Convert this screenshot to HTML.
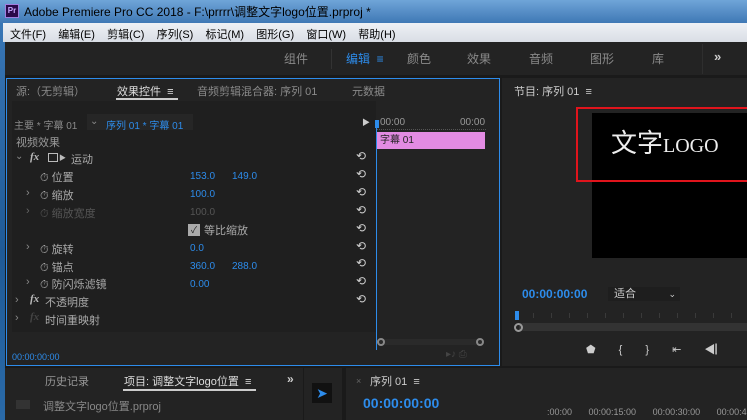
<!DOCTYPE html>
<html><head><meta charset="utf-8"><style>
*{margin:0;padding:0;box-sizing:border-box}
body{width:747px;height:420px;overflow:hidden;background:#1d1d1d;position:relative;font-family:"Liberation Sans","Noto Sans CJK SC",sans-serif;font-size:11px;color:#b5b5b5}
.a{position:absolute;white-space:nowrap}
.b{color:#2d8ceb}
</style></head><body>
<div class="a" style="left:0;top:0;width:747px;height:420px;background:linear-gradient(180deg,#3b79b8,#1f5a96 60%,#2a6aa8)"></div>
<div class="a" style="left:0;top:0;width:747px;height:23px;background:linear-gradient(180deg,#6fa5d8,#3f78b5)"></div>
<div class="a" style="left:5px;top:4px;width:14px;height:14px;background:#2a0a4a;border:1px solid #a07fe0;color:#c8a8ff;font-size:8px;line-height:12px;text-align:center;font-weight:bold">Pr</div>
<div class="a" style="left:24px;top:3px;font-size:12px;color:#000">Adobe Premiere Pro CC 2018 - F:\prrrr\调整文字logo位置.prproj *</div>
<div class="a" style="left:3px;top:23px;width:744px;height:19px;background:linear-gradient(180deg,#eef1f5,#d9dee5)"></div>
<div class="a" style="left:10px;top:26px;font-size:11px;color:#000">文件(F)&nbsp;&nbsp;&nbsp;&nbsp;编辑(E)&nbsp;&nbsp;&nbsp;&nbsp;剪辑(C)&nbsp;&nbsp;&nbsp;&nbsp;序列(S)&nbsp;&nbsp;&nbsp;&nbsp;标记(M)&nbsp;&nbsp;&nbsp;&nbsp;图形(G)&nbsp;&nbsp;&nbsp;&nbsp;窗口(W)&nbsp;&nbsp;&nbsp;&nbsp;帮助(H)</div>
<div class="a" style="left:5px;top:42px;width:742px;height:378px;background:#1a1a1a"></div>
<div class="a" style="left:5px;top:42px;width:742px;height:33px;background:#232323"></div>
<div class="a" style="left:331px;top:49px;width:1px;height:20px;background:#333"></div>
<div class="a" style="left:284px;top:50px;font-size:12px;color:#8a8a8a">组件</div>
<div class="a" style="left:346px;top:50px;font-size:12px;color:#2d8ceb">编辑 &nbsp;≡</div>
<div class="a" style="left:407px;top:50px;font-size:12px;color:#8a8a8a">颜色</div>
<div class="a" style="left:467px;top:50px;font-size:12px;color:#8a8a8a">效果</div>
<div class="a" style="left:529px;top:50px;font-size:12px;color:#8a8a8a">音频</div>
<div class="a" style="left:590px;top:50px;font-size:12px;color:#8a8a8a">图形</div>
<div class="a" style="left:652px;top:50px;font-size:12px;color:#8a8a8a">库</div>
<div class="a" style="left:702px;top:44px;width:1px;height:30px;background:#2e2e2e"></div>
<div class="a" style="left:714px;top:49px;font-size:13px;color:#ccc;font-weight:bold">»</div>
<div class="a" style="left:6px;top:78px;width:494px;height:288px;background:#232323;border:1px solid #2d8ceb"></div>
<div class="a" style="left:16px;top:83px;font-size:11px;color:#8a8a8a">源:（无剪辑）</div>
<div class="a" style="left:117px;top:83px;font-size:11px;color:#ddd">效果控件 &nbsp;≡</div>
<div class="a" style="left:116px;top:98px;width:62px;height:2px;background:#ccc"></div>
<div class="a" style="left:197px;top:83px;font-size:11px;color:#8a8a8a">音频剪辑混合器: 序列 01</div>
<div class="a" style="left:352px;top:83px;font-size:11px;color:#8a8a8a">元数据</div>
<div class="a" style="left:12px;top:101px;width:364px;height:231px;background:#1f1f1f"></div>
<div class="a" style="left:14px;top:117px;font-size:10px;color:#8a8a8a">主要 * 字幕 01</div>
<div class="a" style="left:87px;top:114px;width:106px;height:16px;background:#262626"></div>
<div class="a" style="left:90px;top:116px;font-size:10px;color:#8a8a8a">⌄</div>
<div class="a" style="left:106px;top:117px;font-size:10px;color:#2d8ceb">序列 01 * 字幕 01</div>
<div class="a" style="left:362px;top:117px;font-size:8px;color:#ccc">▶</div>
<div class="a" style="left:16px;top:134px;font-size:11px;color:#999">视频效果</div>
<div class="a" style="left:15px;top:151px;font-size:10px;color:#888">⌄</div>
<div class="a" style="left:30px;top:151px;font-size:11px;color:#bbb;font-style:italic;font-family:'Liberation Serif',serif;font-weight:bold">fx</div>
<div class="a" style="left:48px;top:153px;width:10px;height:9px;border:1px solid #bbb"></div>
<div class="a" style="left:59px;top:153px;font-size:7px;color:#bbb">▶</div>
<div class="a" style="left:71px;top:151px;color:#aaa">运动</div>
<div class="a" style="left:40px;top:169px;color:#aaa">⏱ 位置</div><div class="a b" style="left:190px;top:171px;font-size:10px">153.0</div><div class="a b" style="left:232px;top:171px;font-size:10px">149.0</div>
<div class="a" style="left:26px;top:187px;color:#888">›</div><div class="a" style="left:40px;top:187px;color:#aaa">⏱ 缩放</div><div class="a b" style="left:190px;top:189px;font-size:10px">100.0</div>
<div class="a" style="left:26px;top:205px;color:#666">›</div><div class="a" style="left:40px;top:205px;color:#555">⏱ 缩放宽度</div><div class="a" style="left:190px;top:207px;font-size:10px;color:#555">100.0</div>
<div class="a" style="left:188px;top:224px;width:12px;height:12px;background:#aaa;color:#222;font-size:9px;line-height:12px;text-align:center">✓</div><div class="a" style="left:204px;top:222px;color:#aaa">等比缩放</div>
<div class="a" style="left:26px;top:241px;color:#888">›</div><div class="a" style="left:40px;top:241px;color:#aaa">⏱ 旋转</div><div class="a b" style="left:190px;top:243px;font-size:10px">0.0</div>
<div class="a" style="left:40px;top:259px;color:#aaa">⏱ 锚点</div><div class="a b" style="left:190px;top:261px;font-size:10px">360.0</div><div class="a b" style="left:232px;top:261px;font-size:10px">288.0</div>
<div class="a" style="left:26px;top:276px;color:#888">›</div><div class="a" style="left:40px;top:276px;color:#aaa">⏱ 防闪烁滤镜</div><div class="a b" style="left:190px;top:279px;font-size:10px">0.00</div>
<div class="a" style="left:15px;top:294px;color:#888">›</div><div class="a" style="left:30px;top:293px;color:#bbb;font-style:italic;font-family:'Liberation Serif',serif;font-weight:bold">fx</div><div class="a" style="left:45px;top:294px;color:#aaa">不透明度</div>
<div class="a" style="left:15px;top:312px;color:#888">›</div><div class="a" style="left:30px;top:311px;color:#444;font-style:italic;font-family:'Liberation Serif',serif;font-weight:bold">fx</div><div class="a" style="left:45px;top:312px;color:#aaa">时间重映射</div>
<div class="a" style="left:356px;top:148px;font-size:12px;line-height:17.9px;color:#ccc;white-space:pre">⟲
⟲
⟲
⟲
⟲
⟲
⟲
⟲
⟲</div>
<div class="a" style="left:12px;top:352px;font-size:9px;color:#2d8ceb">00:00:00:00</div>
<div class="a" style="left:380px;top:117px;font-size:10px;color:#999">00:00</div>
<div class="a" style="left:460px;top:117px;font-size:10px;color:#999">00:00</div>
<div class="a" style="left:376px;top:127px;width:110px;height:3px;border-bottom:1px dotted #555"></div>
<div class="a" style="left:375px;top:120px;width:4px;height:8px;background:#2d8ceb"></div>
<div class="a" style="left:376px;top:128px;width:1px;height:222px;background:#2d8ceb"></div>
<div class="a" style="left:377px;top:132px;width:108px;height:17px;background:#e38be3;color:#222;font-size:10px;line-height:17px;padding-left:3px">字幕 01</div>
<div class="a" style="left:378px;top:339px;width:106px;height:6px;background:#2a2a2a;border-radius:3px"></div>
<div class="a" style="left:377px;top:338px;width:8px;height:8px;border:2px solid #888;border-radius:50%"></div>
<div class="a" style="left:476px;top:338px;width:8px;height:8px;border:2px solid #888;border-radius:50%"></div>
<div class="a" style="left:446px;top:349px;font-size:10px;color:#444">▸♪ ⎙</div>
<div class="a" style="left:502px;top:78px;width:245px;height:288px;background:#232323"></div>
<div class="a" style="left:514px;top:83px;font-size:11px;color:#ccc">节目: 序列 01 &nbsp;≡</div>
<div class="a" style="left:592px;top:113px;width:155px;height:145px;background:#000"></div>
<div class="a" style="left:576px;top:107px;width:175px;height:75px;border:2px solid #e0141c"></div>
<div class="a" style="left:611px;top:127px;font-size:26px;color:#eee;line-height:32px">文字<span style="font-family:'Liberation Serif',serif;font-size:20px">LOGO</span></div>
<div class="a" style="left:522px;top:287px;font-size:12px;color:#2d8ceb;font-weight:bold">00:00:00:00</div>
<div class="a" style="left:608px;top:287px;width:72px;height:14px;background:#1e1e1e;font-size:11px;color:#ccc;padding-left:6px;line-height:14px">适合<span style="float:right;margin-right:4px;font-size:9px">⌄</span></div>
<div class="a" style="left:515px;top:313px;width:232px;height:5px;background:repeating-linear-gradient(90deg,#3a3a3a 0 1px,transparent 1px 18px)"></div>
<div class="a" style="left:515px;top:311px;width:4px;height:9px;background:#2d8ceb"></div>
<div class="a" style="left:519px;top:323px;width:228px;height:8px;background:#333"></div>
<div class="a" style="left:514px;top:323px;width:9px;height:9px;border:2px solid #999;border-radius:50%"></div>
<div class="a" style="left:586px;top:341px;font-size:11px;color:#ccc;word-spacing:20px">⬟ { } ⇤ ◀▏ ▶</div>
<div class="a" style="left:5px;top:368px;width:298px;height:52px;background:#232323"></div>
<div class="a" style="left:45px;top:373px;font-size:11px;color:#999">历史记录</div>
<div class="a" style="left:124px;top:373px;font-size:11px;color:#ddd">项目: 调整文字logo位置 &nbsp;≡</div>
<div class="a" style="left:123px;top:389px;width:133px;height:2px;background:#ccc"></div>
<div class="a" style="left:287px;top:372px;font-size:12px;color:#ccc;font-weight:bold">»</div>
<div class="a" style="left:16px;top:400px;width:14px;height:9px;background:#333"></div>
<div class="a" style="left:43px;top:398px;font-size:11px;color:#888">调整文字logo位置.prproj</div>
<div class="a" style="left:304px;top:368px;width:38px;height:52px;background:#232323"></div>
<div class="a" style="left:312px;top:383px;width:20px;height:20px;background:#111;color:#2d8ceb;font-size:14px;text-align:center;line-height:20px">➤</div>
<div class="a" style="left:346px;top:368px;width:401px;height:52px;background:#232323"></div>
<div class="a" style="left:356px;top:376px;font-size:9px;color:#666">×</div>
<div class="a" style="left:370px;top:373px;font-size:11px;color:#ccc">序列 01 &nbsp;≡</div>
<div class="a" style="left:363px;top:395px;font-size:14px;color:#2d8ceb;font-weight:bold">00:00:00:00</div>
<div class="a" style="left:547px;top:407px;font-size:9px;color:#999;word-spacing:14px">:00:00 00:00:15:00 00:00:30:00 00:00:45</div>
</body></html>
